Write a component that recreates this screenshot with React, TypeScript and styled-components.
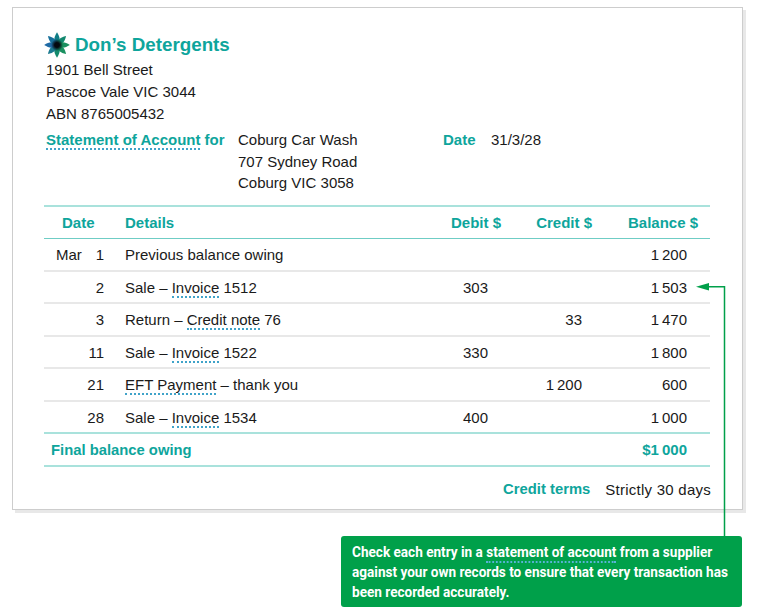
import styled, { createGlobalStyle } from "styled-components";

const TEAL = "#0ea59c";
const INK = "#1a1a1a";
const GREEN = "#00a04a";

const GlobalStyle = createGlobalStyle`
  html, body { margin: 0; padding: 0; background: #fff; }
  body { font-family: "Liberation Sans", Arial, sans-serif; color: ${INK}; }
`;

const Page = styled.div`
  position: relative;
  width: 783px;
  height: 614px;
  padding: 7px 0 0 12px;
  box-sizing: border-box;
  overflow: hidden;
`;

const Statement = styled.section`
  width: 731px;
  height: 503px;
  box-sizing: border-box;
  padding: 24px 32px 0 31px;
  background: #fff;
  border: 1px solid #cdcdcd;
  box-shadow: 3px 3px 0 #e8e8e8;
  font-size: 15px;
`;

const Brand = styled.div`
  display: flex;
  align-items: center;
  gap: 5px;
  height: 26px;
`;

const BrandName = styled.h1`
  margin: 0;
  font-size: 18.8px;
  font-weight: 700;
  color: ${TEAL};
`;

const Address = styled.div`
  margin: 1px 0 0 2px;
  line-height: 22px;
`;

const Meta = styled.div`
  display: grid;
  grid-template-columns: 192px 205px 48px 1fr;
  margin: 4px 0 0 2px;
  line-height: 21.5px;
`;

const Label = styled.span`
  font-weight: 700;
  color: ${TEAL};
`;

const Term = styled.span`
  border-bottom: 2px dotted #3fa3c9;
`;

const Sheet = styled.div`
  margin-top: 11px;
  border-top: 2px solid #a9e2dc;
`;

const Row = styled.div<{ $line?: "grey" | "teal" | "soft" }>`
  display: grid;
  grid-template-columns: 66px 311px 80px 91px 106px;
  height: 32.5px;
  box-sizing: border-box;
  align-items: center;
  padding: 1px 12px 0 0;
  border-bottom: ${(p) =>
    p.$line === "teal"
      ? "1px solid #6fcdc5"
      : p.$line === "soft"
        ? "2px solid #a9e2dc"
        : "2px solid #e8e8e8"};
`;

const HeadCell = styled.div<{ $right?: boolean; $indent?: number }>`
  font-weight: 700;
  color: ${TEAL};
  text-align: ${(p) => (p.$right ? "right" : "left")};
  padding-left: ${(p) => p.$indent ?? 0}px;
`;

const DateCell = styled.div`
  display: flex;
  justify-content: space-between;
  padding: 0 6px 0 12px;
`;

const Details = styled.div`
  padding-left: 15px;
`;

const Amount = styled.div<{ $inset: number }>`
  text-align: right;
  padding-right: ${(p) => p.$inset}px;
`;

const FinalLabel = styled(Label)`
  grid-column: 1 / 3;
  padding-left: 7px;
  font-size: 14.8px;
`;

const FinalAmount = styled(Label)`
  grid-column: 3 / 6;
  text-align: right;
  padding-right: 11px;
`;

const Terms = styled.div`
  display: flex;
  justify-content: flex-end;
  gap: 15px;
  margin: 14px -1px 0 0;
`;

const TermsLabel = styled(Label)`
  font-size: 14.8px;
`;

const TermsValue = styled.span`
  letter-spacing: 0.25px;
`;

const Callout = styled.aside`
  position: absolute;
  left: 341px;
  top: 536px;
  width: 401px;
  height: 71px;
  box-sizing: border-box;
  padding: 6px 0 0 11px;
  background: ${GREEN};
  border-radius: 3px;
  color: #fff;
`;

const CalloutText = styled.p`
  width: max-content;
  margin: 0;
  font-family: "Roboto", sans-serif;
  font-size: 15px;
  font-weight: 700;
  line-height: 20px;
  transform: scaleX(0.905);
  transform-origin: left top;
`;

const CalloutTerm = styled.span`
  border-bottom: 2px dotted #5ab4d8;
`;

const Connector = styled.svg`
  position: absolute;
  left: 690px;
  top: 276px;
`;

const petals = [
  { angle: 0, fill: "#0f7d86" },
  { angle: 45, fill: "#12886f" },
  { angle: 90, fill: "#1b9160" },
  { angle: 135, fill: "#1a9060" },
  { angle: 180, fill: "#138a6c" },
  { angle: 225, fill: "#1b7a8f" },
  { angle: 270, fill: "#1f6aa5" },
  { angle: 315, fill: "#176f9a" },
];

const Logo = () => (
  <svg width="26" height="26" viewBox="-13 -13 26 26" aria-hidden="true">
    <defs>
      <radialGradient id="core">
        <stop offset="0.4" stopColor="#05090f" />
        <stop offset="1" stopColor="#05090f" stopOpacity="0" />
      </radialGradient>
    </defs>
    {petals.map((p) => (
      <path
        key={p.angle}
        d="M0 0C-4 -4 -3 -8 0 -12.8C3 -8 4 -4 0 0Z"
        fill={p.fill}
        transform={`rotate(${p.angle})`}
      />
    ))}
    <circle r="6" fill="url(#core)" />
  </svg>
);

const rows = [
  { month: "Mar", day: "1", text: <>Previous balance owing</>, balance: "1\u2009200" },
  { day: "2", text: <>Sale – <Term>Invoice</Term> 1512</>, debit: "303", balance: "1\u2009503" },
  { day: "3", text: <>Return – <Term>Credit note</Term> 76</>, credit: "33", balance: "1\u2009470" },
  { day: "11", text: <>Sale – <Term>Invoice</Term> 1522</>, debit: "330", balance: "1\u2009800" },
  { day: "21", text: <><Term>EFT Payment</Term> – thank you</>, credit: "1\u2009200", balance: "600" },
  { day: "28", text: <>Sale – <Term>Invoice</Term> 1534</>, debit: "400", balance: "1\u2009000" },
];

export default function App() {
  return (
    <Page>
      <GlobalStyle />
      <Statement>
        <Brand>
          <Logo />
          <BrandName>Don’s Detergents</BrandName>
        </Brand>
        <Address>
          1901 Bell Street
          <br />
          Pascoe Vale VIC 3044
          <br />
          ABN 8765005432
        </Address>
        <Meta>
          <Label>
            <Term>Statement of Account</Term> for
          </Label>
          <div>
            Coburg Car Wash
            <br />
            707 Sydney Road
            <br />
            Coburg VIC 3058
          </div>
          <Label>Date</Label>
          <div>31/3/28</div>
        </Meta>
        <Sheet>
          <Row $line="teal">
            <HeadCell $indent={18}>Date</HeadCell>
            <HeadCell $indent={15}>Details</HeadCell>
            <HeadCell $right>Debit $</HeadCell>
            <HeadCell $right>Credit $</HeadCell>
            <HeadCell $right>Balance $</HeadCell>
          </Row>
          {rows.map((r, i) => (
            <Row key={r.day} $line={i === rows.length - 1 ? "soft" : "grey"}>
              <DateCell>
                <span>{r.month}</span>
                <span>{r.day}</span>
              </DateCell>
              <Details>{r.text}</Details>
              <Amount $inset={13}>{r.debit}</Amount>
              <Amount $inset={10}>{r.credit}</Amount>
              <Amount $inset={11}>{r.balance}</Amount>
            </Row>
          ))}
          <Row $line="soft">
            <FinalLabel>Final balance owing</FinalLabel>
            <FinalAmount>$1{"\u2009"}000</FinalAmount>
          </Row>
        </Sheet>
        <Terms>
          <TermsLabel>Credit terms</TermsLabel>
          <TermsValue>Strictly 30 days</TermsValue>
        </Terms>
      </Statement>
      <Connector width="40" height="262" viewBox="0 0 40 262" aria-hidden="true">
        <path d="M16 10.7H34.5V261" fill="none" stroke={GREEN} strokeWidth="1.5" />
        <path d="M6 10.7L19 6.9V14.5Z" fill={GREEN} />
      </Connector>
      <Callout>
        <CalloutText>
          Check each entry in a <CalloutTerm>statement of account</CalloutTerm> from a supplier
          <br />
          against your own records to ensure that every transaction has
          <br />
          been recorded accurately.
        </CalloutText>
      </Callout>
    </Page>
  );
}
